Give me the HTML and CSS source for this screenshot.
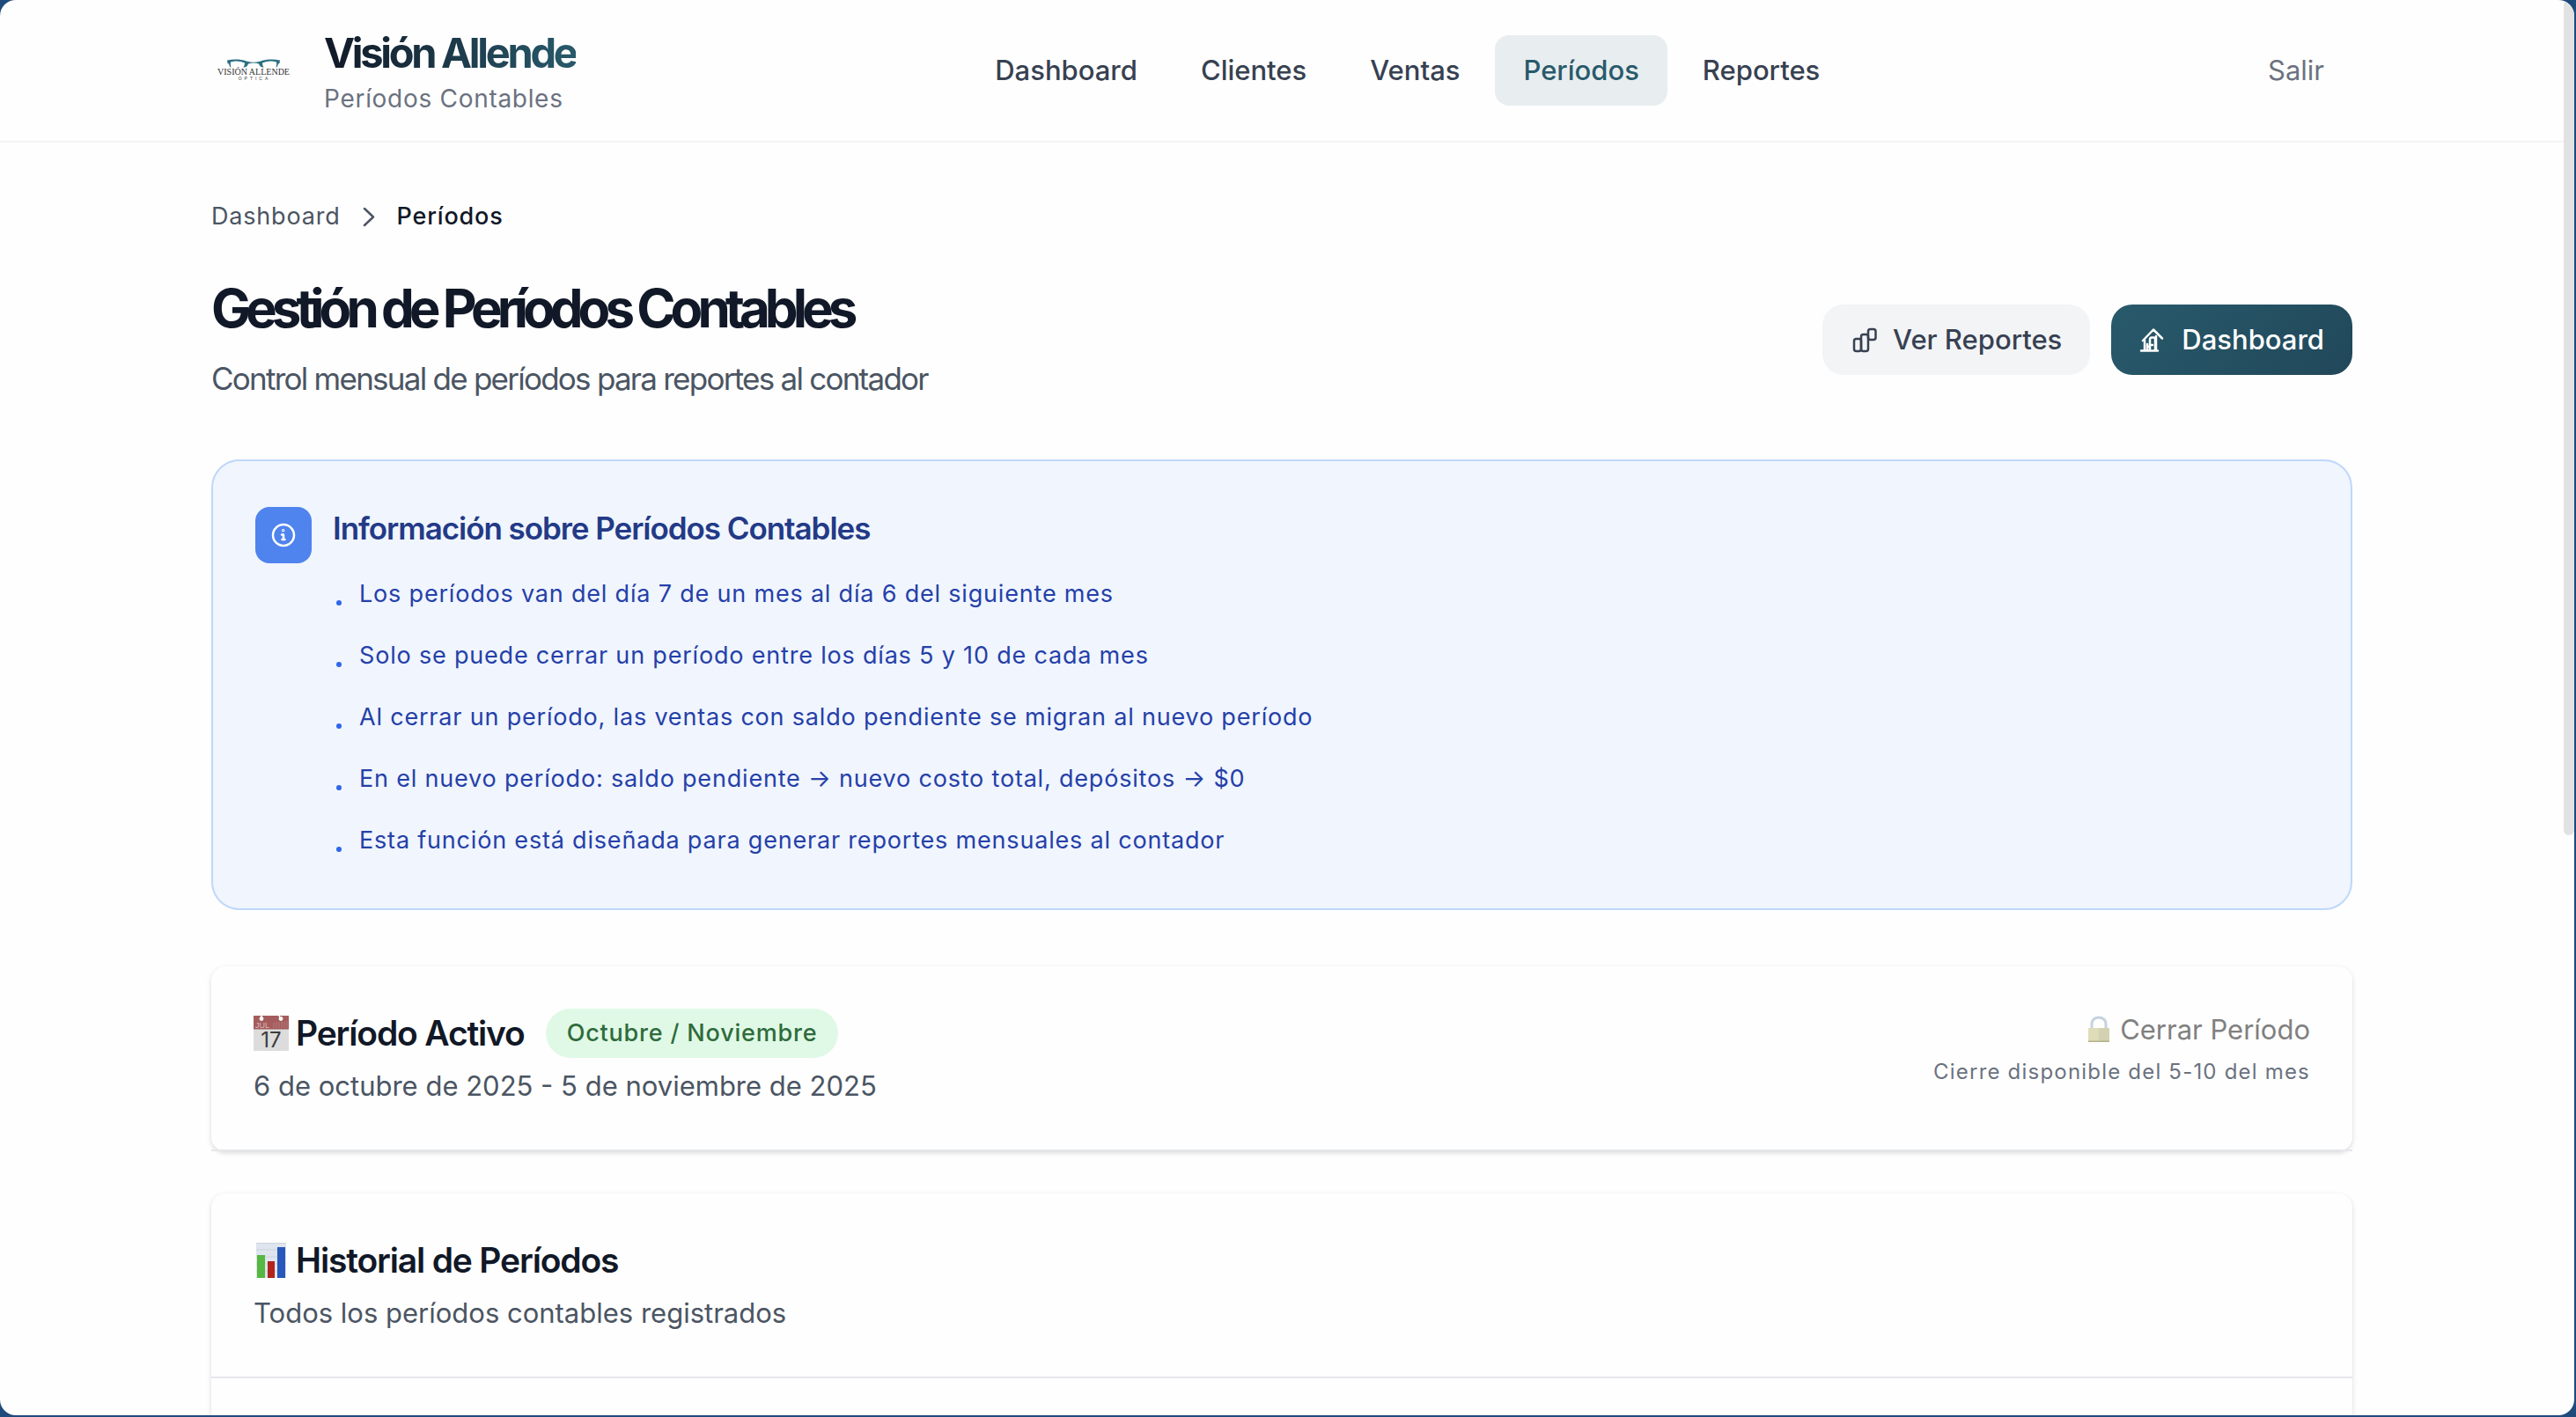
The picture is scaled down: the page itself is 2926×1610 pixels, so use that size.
FILE: index.html
```html
<!DOCTYPE html>
<html lang="es">
<head>
<meta charset="utf-8">
<title>Visión Allende - Períodos Contables</title>
<link rel="stylesheet" href="styles.css">
</head>
<body>
<div class="window">
  <header class="topbar">
    <div class="container topbar-inner">
      <div class="brand">
        <svg class="logo" viewBox="0 0 96 96" role="img" aria-label="Visión Allende Óptica">
          <path d="M18 36.500C25 35 33 35 40 37.500Q48 40 56 37.500C63 35 71 35 78 36.500L77.500 40L76 40.500C75.500 43 75 44 74 44.500H59C56.500 44.500 55 43 54 40.500Q48 38.500 42 40.500C41 43 39.500 44.500 37 44.500H22C21 44 20.500 43 20 40.500L18.500 40Z" fill="#2b6f80"/>
          <path d="M22 38.500Q30 36 38 39.500C38 42 37 44 35.500 46H23C22 44 21.500 41 22 38.500ZM74 38.500Q66 36 58 39.500C58 42 59 44 60.500 46H73C74 44 74.500 41 74 38.500Z" fill="#fefefe"/>
          <text class="logo-name" x="48" y="53" text-anchor="middle">VISIÓN ALLENDE</text>
          <text class="logo-tag" x="49" y="59" text-anchor="middle">OPTICA</text>
        </svg>
        <div>
          <p class="brand-name">Visión Allende</p>
          <p class="brand-sub">Períodos Contables</p>
        </div>
      </div>
      <nav class="nav">
        <a class="nav-link" href="#">Dashboard</a>
        <a class="nav-link" href="#">Clientes</a>
        <a class="nav-link" href="#">Ventas</a>
        <a class="nav-link active" href="#" aria-current="page">Períodos</a>
        <a class="nav-link" href="#">Reportes</a>
      </nav>
      <button class="logout" type="button">Salir</button>
    </div>
  </header>

  <main class="container content">
    <nav class="crumbs" aria-label="Ruta">
      <a href="#">Dashboard</a>
      <svg class="chevron" viewBox="0 0 16 24" fill="none" stroke="currentColor" stroke-width="2.5" stroke-linecap="round" stroke-linejoin="round"><path d="M3 3l10 9.500L3 22"/></svg>
      <span aria-current="page">Períodos</span>
    </nav>

    <div class="page-head">
      <div>
        <h1>Gestión de Períodos Contables</h1>
        <p class="lead">Control mensual de períodos para reportes al contador</p>
      </div>
      <div class="actions">
        <button class="btn btn-light" type="button">
          <svg class="btn-icon" viewBox="0 0 32 32" fill="none" stroke="currentColor" stroke-width="2.500"><rect x="4" y="15" width="8" height="14" rx="2.500"/><rect x="12" y="10" width="8" height="19" rx="2.500"/><rect x="20" y="4" width="8.500" height="12" rx="2.500"/></svg>
          Ver Reportes
        </button>
        <button class="btn btn-primary" type="button">
          <svg class="btn-icon" viewBox="0 0 32 32" fill="none" stroke="currentColor" stroke-width="2.500" stroke-linecap="round" stroke-linejoin="round"><path d="M4 17L16 4.500L26 14.500M2 28.500H21M6 16V28M19 12V28M12 28V16Q12 13.500 14 13.500H16Q18 13.500 18 16V28M9 21V28M9 24H12M13 22H15"/></svg>
          Dashboard
        </button>
      </div>
    </div>

    <section class="info">
      <div class="info-icon">
        <svg viewBox="0 0 28 28" fill="none" stroke="currentColor" stroke-width="2.500" stroke-linecap="round" stroke-linejoin="round"><circle cx="14" cy="14" r="12"/><path d="M12 13.500H14V19M12.500 19H15.500"/><circle cx="13.700" cy="8.700" r=".5"/></svg>
      </div>
      <div>
        <h2>Información sobre Períodos Contables</h2>
        <ul>
          <li><span>Los períodos van del día 7 de un mes al día 6 del siguiente mes</span></li>
          <li><span>Solo se puede cerrar un período entre los días 5 y 10 de cada mes</span></li>
          <li><span>Al cerrar un período, las ventas con saldo pendiente se migran al nuevo período</span></li>
          <li><span>En el nuevo período: saldo pendiente → nuevo costo total, depósitos → $0</span></li>
          <li><span>Esta función está diseñada para generar reportes mensuales al contador</span></li>
        </ul>
      </div>
    </section>

    <section class="card">
      <div class="card-head">
        <div>
          <div class="title-row">
            <h3>
              <svg class="emoji" viewBox="0 0 40 40" role="img" aria-label="Calendario"><rect width="40" height="40" fill="#dcdcdc"/><rect width="40" height="15.500" fill="#a45c5c"/><circle cx="9" cy="3.500" r="2.400" fill="#fff"/><circle cx="31" cy="3.500" r="2.400" fill="#fff"/><path d="M9 0V4M29 0L31 4" stroke="#fff" stroke-width="1.500"/><path d="M23 8V14M26 7V14M29 7V14M32 7V14M35 7V14M38 6V14" stroke="#b87a7a"/><text class="cal-month" x="2" y="14">JUL</text><text class="cal-day" x="20" y="36" text-anchor="middle">17</text></svg>
              <span>Período Activo</span>
            </h3>
            <span class="badge">Octubre / Noviembre</span>
          </div>
          <p class="card-sub">6 de octubre de 2025 - 5 de noviembre de 2025</p>
        </div>
        <div class="close-box">
          <button class="close-btn" type="button" disabled>
            <svg class="lock" viewBox="0 0 24 32" role="img" aria-label="Candado"><path d="M4 15V9.500C4 -.5 20 -.5 20 9.500V15" fill="none" stroke="#c6d2de" stroke-width="3"/><rect x="0" y="14" width="24" height="16" rx="1" fill="#d3d1b0"/><rect x="0" y="14" width="12" height="16" rx="1" fill="#dfdcb8"/><rect x="0" y="28.500" width="24" height="1.500" fill="#b4b089"/></svg>
            Cerrar Período
          </button>
          <p class="close-note">Cierre disponible del 5-10 del mes</p>
        </div>
      </div>
    </section>

    <section class="card">
      <div class="card-head">
        <div>
          <div class="title-row">
            <h3>
              <svg class="emoji" viewBox="0 0 40 40" role="img" aria-label="Gráfico de barras"><rect x="3" width="34" height="40" fill="#dfe5ee"/><path d="M3 .5H37M3 8H37M3 16H37M3 24H37M3 32H37" stroke="#cdd2da"/><rect x="4" y="14" width="9" height="26" fill="#55b840"/><rect x="16" y="21" width="8" height="19" fill="#b2241c"/><rect x="27" y="5" width="9" height="35" fill="#2858bc"/></svg>
              <span>Historial de Períodos</span>
            </h3>
          </div>
          <p class="card-sub">Todos los períodos contables registrados</p>
        </div>
      </div>
      <div class="card-body"></div>
    </section>
  </main>
  <div class="scroll-thumb"></div>
</div>
</body>
</html>
```
FILE: styles.css
```css
* { box-sizing: border-box; }

body {
  margin: 0;
  height: 100vh;
  padding: 0 2px 2px 0;
  overflow: hidden;
  background: #1f4a7c;
  color: #111827;
  font-family: Inter, "Liberation Sans", sans-serif;
  font-size: 31px;
  line-height: 48px;
}

h1, h2, h3, p, ul { margin: 0; padding: 0; }
a { color: inherit; text-decoration: none; }
button { border: 0; font: inherit; color: inherit; background: none; }

.window {
  position: relative;
  height: 100%;
  padding-right: 12px;
  overflow: hidden;
  border-radius: 18px;
  background: #fefefe;
}

.scroll-thumb {
  position: absolute;
  top: 0;
  right: 0;
  width: 12px;
  height: 59%;
  border-radius: 6px;
  background: #e2e2e2;
}

.container {
  max-width: 2560px;
  margin: 0 auto;
  padding: 0 64px;
}

/* Top bar */
.topbar { border-bottom: 2px solid #f3f4f6; }

.topbar-inner {
  display: flex;
  align-items: center;
  justify-content: space-between;
  height: 160px;
}

.brand { display: flex; align-items: center; gap: 32px; }
.logo { width: 96px; height: 96px; }
.logo-name { font: 10px "Liberation Serif", serif; fill: #333; }
.logo-tag { font: 5px "Liberation Sans", sans-serif; letter-spacing: 3px; fill: #444; }

.brand-name {
  width: fit-content;
  font-size: 47px;
  line-height: 64px;
  font-weight: 700;
  letter-spacing: -0.07em;
  color: transparent;
  background: linear-gradient(90deg, #111827, #285a6b);
  background-clip: text;
  -webkit-background-clip: text;
}

.brand-sub {
  font-size: 28px;
  line-height: 40px;
  letter-spacing: 0.025em;
  color: #6b7280;
}

.nav { display: flex; gap: 8px; }
.nav-link {
  padding: 16px 32px;
  border-radius: 16px;
  font-weight: 500;
  color: #374151;
}
.nav-link.active { background: #e8edef; color: #285a6b; }
.logout { padding: 16px 32px; color: #6b7280; }

/* Page heading */
.content { padding-top: 64px; }

.crumbs {
  display: flex;
  align-items: center;
  gap: 24px;
  margin-bottom: 48px;
  font-size: 27px;
  line-height: 40px;
  letter-spacing: 0.03em;
  color: #4b5563;
}
.crumbs span { font-weight: 500; color: #111827; }
.chevron { width: 16px; height: 24px; }

.page-head {
  display: flex;
  align-items: center;
  justify-content: space-between;
  margin-bottom: 64px;
}

h1 {
  margin-bottom: 16px;
  font-size: 60px;
  line-height: 72px;
  font-weight: 700;
  letter-spacing: -0.1em;
}

.lead {
  font-size: 35px;
  line-height: 56px;
  letter-spacing: -0.05em;
  color: #4b5563;
}

.actions { display: flex; gap: 24px; }
.btn {
  display: flex;
  align-items: center;
  gap: 16px;
  padding: 16px 32px;
  border-radius: 24px;
  font-weight: 500;
}
.btn-icon { width: 32px; height: 32px; }
.btn-light { background: #f3f4f6; color: #374151; }
.btn-primary { background: linear-gradient(135deg, #285a6b, #21485a); color: #fff; }

/* Information panel */
.info {
  display: flex;
  align-items: flex-start;
  gap: 24px;
  margin-bottom: 64px;
  padding: 48px 48px 54px;
  border: 2px solid #bfd7fa;
  border-radius: 32px;
  background: #f0f5fe;
}
.info-icon {
  display: grid;
  place-items: center;
  width: 64px;
  height: 64px;
  margin-top: 4px;
  border-radius: 16px;
  background: #4f83ee;
  color: #fff;
}
.info-icon svg { width: 28px; height: 28px; }

h2 {
  margin-bottom: 24px;
  font-size: 35px;
  line-height: 56px;
  font-weight: 600;
  letter-spacing: -0.03em;
  color: #233a86;
}

.info ul {
  display: grid;
  gap: 24px;
  list-style: none;
  font-size: 27px;
  line-height: 46px;
  letter-spacing: 0.03em;
  color: #2540a8;
}
.info li { display: flex; gap: 20px; padding-left: 4px; }
.info li::before {
  content: "";
  width: 6px;
  height: 6px;
  margin-top: 30px;
  border-radius: 50%;
  background: #2f66ea;
}

/* Cards */
.card {
  margin-bottom: 48px;
  border-radius: 16px;
  box-shadow: 0 2px 6px rgba(0, 0, 0, 0.1), 0 2px 4px rgba(0, 0, 0, 0.06);
}
.card-head {
  display: flex;
  justify-content: space-between;
  padding: 48px;
  border-bottom: 2px solid #e5e7eb;
}
.card-body { height: 160px; }

.title-row { display: flex; align-items: center; gap: 24px; margin-bottom: 8px; }
h3 {
  display: flex;
  align-items: center;
  gap: 8px;
  font-size: 39px;
  line-height: 56px;
  font-weight: 600;
  letter-spacing: -0.03em;
}
.emoji { width: 40px; height: 40px; overflow: visible; }
.cal-month { font: 9px "Liberation Sans", sans-serif; letter-spacing: 0; fill: #dcb8b8; }
.cal-day { font: 24px Inter, sans-serif; letter-spacing: 0; fill: #3c3c3c; }

.badge {
  padding: 8px 24px;
  border-radius: 28px;
  background: #e0f9e6;
  font-size: 27px;
  line-height: 40px;
  font-weight: 500;
  letter-spacing: 0.03em;
  color: #2f6b3c;
}
.card-sub { color: #4b5563; }

.close-box { display: flex; flex-direction: column; align-items: flex-end; gap: 8px; }
.close-btn { display: flex; align-items: center; gap: 12px; padding: 0; color: #808080; }
.lock { width: 24px; height: 32px; }
.close-note {
  font-size: 24px;
  line-height: 32px;
  letter-spacing: 0.05em;
  color: #6b7280;
}
```
